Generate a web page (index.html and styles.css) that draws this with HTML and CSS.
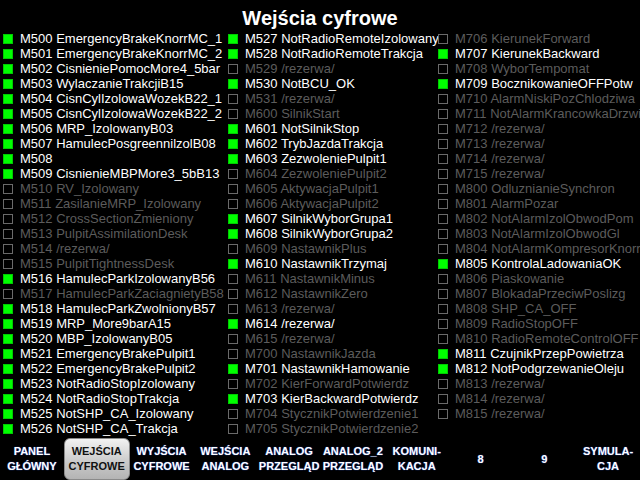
FILE: index.html
```html
<!DOCTYPE html>
<html lang="pl">
<head>
    <meta charset="UTF-8">
    <title>Wejścia cyfrowe</title>
    <link rel="stylesheet" href="styles.css">
</head>
<body>
    <div class="screen">
        <h1 class="title">Wejścia cyfrowe</h1>

        <div class="inputs" id="inputs"></div>

        <nav class="menu">
            <a class="menu-item">PANEL<br>GŁÓWNY</a>
            <a class="menu-item active">WEJŚCIA<br>CYFROWE</a>
            <a class="menu-item">WYJŚCIA<br>CYFROWE</a>
            <a class="menu-item">WEJŚCIA<br>ANALOG</a>
            <a class="menu-item">ANALOG<br>PRZEGLĄD</a>
            <a class="menu-item">ANALOG_2<br>PRZEGLĄD</a>
            <a class="menu-item">KOMUNI-<br>KACJA</a>
            <a class="menu-item">8</a>
            <a class="menu-item">9</a>
            <a class="menu-item">SYMULA-<br>CJA</a>
        </nav>
    </div>

    <script>
        // 1 = aktywne, 0 = nieaktywne
        const columns = [
            [
                ['M500', 'EmergencyBrakeKnorrMC_1', 1],
                ['M501', 'EmergencyBrakeKnorrMC_2', 1],
                ['M502', 'CisnieniePomocMore4_5bar', 1],
                ['M503', 'WylaczanieTrakcjiB15', 1],
                ['M504', 'CisnCylIzolowaWozekB22_1', 1],
                ['M505', 'CisnCylIzolowaWozekB22_2', 1],
                ['M506', 'MRP_IzolowanyB03', 1],
                ['M507', 'HamulecPosgreennilzolB08', 1],
                ['M508', '', 1],
                ['M509', 'CisnienieMBPMore3_5bB13', 1],
                ['M510', 'RV_Izolowany', 0],
                ['M511', 'ZasilanieMRP_Izolowany', 0],
                ['M512', 'CrossSectionZmieniony', 0],
                ['M513', 'PulpitAssimilationDesk', 0],
                ['M514', '/rezerwa/', 0],
                ['M515', 'PulpitTightnessDesk', 0],
                ['M516', 'HamulecParkIzolowanyB56', 1],
                ['M517', 'HamulecParkZaciagnietyB58', 0],
                ['M518', 'HamulecParkZwolnionyB57', 1],
                ['M519', 'MRP_More9barA15', 1],
                ['M520', 'MBP_IzolowanyB05', 1],
                ['M521', 'EmergencyBrakePulpit1', 1],
                ['M522', 'EmergencyBrakePulpit2', 1],
                ['M523', 'NotRadioStopIzolowany', 1],
                ['M524', 'NotRadioStopTrakcja', 1],
                ['M525', 'NotSHP_CA_Izolowany', 1],
                ['M526', 'NotSHP_CA_Trakcja', 1]
            ],
            [
                ['M527', 'NotRadioRemoteIzolowany', 1],
                ['M528', 'NotRadioRemoteTrakcja', 1],
                ['M529', '/rezerwa/', 0],
                ['M530', 'NotBCU_OK', 1],
                ['M531', '/rezerwa/', 0],
                ['M600', 'SilnikStart', 0],
                ['M601', 'NotSilnikStop', 1],
                ['M602', 'TrybJazdaTrakcja', 1],
                ['M603', 'ZezwoleniePulpit1', 1],
                ['M604', 'ZezwoleniePulpit2', 0],
                ['M605', 'AktywacjaPulpit1', 0],
                ['M606', 'AktywacjaPulpit2', 0],
                ['M607', 'SilnikWyborGrupa1', 1],
                ['M608', 'SilnikWyborGrupa2', 1],
                ['M609', 'NastawnikPlus', 0],
                ['M610', 'NastawnikTrzymaj', 1],
                ['M611', 'NastawnikMinus', 0],
                ['M612', 'NastawnikZero', 0],
                ['M613', '/rezerwa/', 0],
                ['M614', '/rezerwa/', 1],
                ['M615', '/rezerwa/', 0],
                ['M700', 'NastawnikJazda', 0],
                ['M701', 'NastawnikHamowanie', 1],
                ['M702', 'KierForwardPotwierdz', 0],
                ['M703', 'KierBackwardPotwierdz', 1],
                ['M704', 'StycznikPotwierdzenie1', 0],
                ['M705', 'StycznikPotwierdzenie2', 0]
            ],
            [
                ['M706', 'KierunekForward', 0],
                ['M707', 'KierunekBackward', 1],
                ['M708', 'WyborTempomat', 0],
                ['M709', 'BocznikowanieOFFPotw', 1],
                ['M710', 'AlarmNiskiPozChlodziwa', 0],
                ['M711', 'NotAlarmKrancowkaDrzwi', 0],
                ['M712', '/rezerwa/', 0],
                ['M713', '/rezerwa/', 0],
                ['M714', '/rezerwa/', 0],
                ['M715', '/rezerwa/', 0],
                ['M800', 'OdluznianieSynchron', 0],
                ['M801', 'AlarmPozar', 0],
                ['M802', 'NotAlarmIzolObwodPom', 0],
                ['M803', 'NotAlarmIzolObwodGl', 0],
                ['M804', 'NotAlarmKompresorKnorr', 0],
                ['M805', 'KontrolaLadowaniaOK', 1],
                ['M806', 'Piaskowanie', 0],
                ['M807', 'BlokadaPrzeciwPoslizg', 0],
                ['M808', 'SHP_CA_OFF', 0],
                ['M809', 'RadioStopOFF', 0],
                ['M810', 'RadioRemoteControlOFF', 0],
                ['M811', 'CzujnikPrzepPowietrza', 1],
                ['M812', 'NotPodgrzewanieOleju', 1],
                ['M813', '/rezerwa/', 0],
                ['M814', '/rezerwa/', 0],
                ['M815', '/rezerwa/', 0]
            ]
        ];

        const container = document.getElementById('inputs');

        columns.forEach(rows => {
            const col = document.createElement('ul');
            col.className = 'input-column';
            rows.forEach(([code, name, on]) => {
                const li = document.createElement('li');
                li.className = on ? 'input on' : 'input';
                li.innerHTML = `<span class="led"></span><span class="label">${code} ${name}</span>`;
                col.appendChild(li);
            });
            container.appendChild(col);
        });
    </script>
</body>
</html>
```

FILE: styles.css
```css
:root {
    --led-on: #00ff00;
    --text-on: #ffffff;
    --text-off: #5c5c5c;
    --frame-off: #6a6a6a;
}

body {
    margin: 0;
    background: #000;
    color: var(--text-on);
    font-family: 'Liberation Sans', Arial, sans-serif;
}

.screen {
    width: 640px;
    height: 480px;
    display: flex;
    flex-direction: column;
    overflow: hidden;
}

.title {
    margin: 0;
    height: 31px;
    font-size: 20px;
    font-weight: bold;
    line-height: 36px;
    text-align: center;
}

.inputs {
    display: grid;
    grid-template-columns: 225px 210px 205px;
    height: 407px;
}

.input-column {
    list-style: none;
    margin: 0;
    padding: 0 0 0 3px;
    min-width: 0;
}

.input {
    display: flex;
    align-items: center;
    height: 15px;
    font-size: 13px;
    white-space: nowrap;
    color: var(--text-off);
}

.input.on {
    color: var(--text-on);
}

.led {
    flex: none;
    box-sizing: border-box;
    width: 10px;
    height: 10px;
    margin-right: 7px;
    border: 1px solid var(--frame-off);
}

.input.on .led {
    background: var(--led-on);
    border-color: #0c0;
}

.menu {
    display: flex;
    height: 42px;
    padding-top: 1px;
}

.menu-item {
    flex: 1;
    display: flex;
    align-items: center;
    justify-content: center;
    text-align: center;
    font-size: 11px;
    font-weight: bold;
    line-height: 15px;
    color: #fff;
    text-shadow: 0 0 1px #2040a0, 0 0 1px #2040a0;
}

.menu-item.active {
    color: #111;
    text-shadow: none;
    border: 1px solid #8a8a8a;
    border-radius: 6px;
    background: linear-gradient(#f2f2f2, #c8c8c8 60%, #b4b4b4);
}
```
